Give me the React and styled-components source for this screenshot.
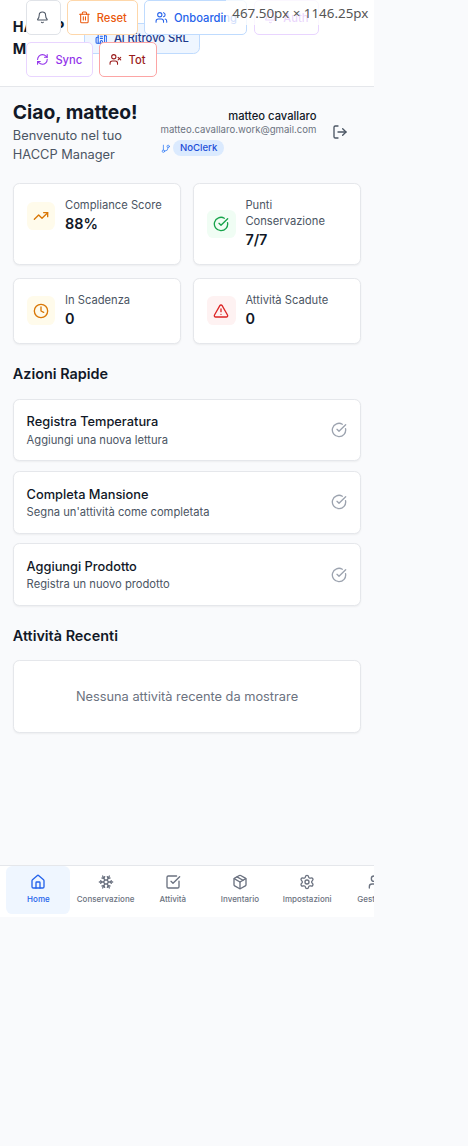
import React from "react";
import styled, { createGlobalStyle, css } from "styled-components";
import {
  Bell, Trash2, Users, RefreshCw, UserX, Building2, GitBranch, LogOut,
  TrendingUp, CircleCheckBig, Clock, TriangleAlert, House, Snowflake,
  SquareCheckBig, Package, Settings, User,
} from "lucide-react";

const Global = createGlobalStyle`
  *, *::before, *::after { box-sizing: border-box; }
  body { margin: 0; background: #f9fafc; color: #111827; font-family: Inter, "Liberation Sans", sans-serif; }
  h1, h2, h3, p { margin: 0; }
  button { font: inherit; color: inherit; margin: 0; }
  svg { flex-shrink: 0; display: block; }
`;

const Phone = styled.div`
  position: relative;
  width: 374.4px;
  height: 917px;
  overflow: hidden;
  display: flex;
  flex-direction: column;
`;

const Header = styled.header`
  height: 87px;
  flex: none;
  display: flex;
  align-items: flex-start;
  gap: 20px;
  padding: 16px 12.8px 0;
  background: #fff;
  border-bottom: 1px solid #e5e7eb;
`;

const Brand = styled.h1`
  width: 51px;
  font-size: 14.4px;
  line-height: 22.4px;
  font-weight: 700;
`;

const Company = styled.div`
  display: flex;
  align-items: center;
  gap: 6.4px;
  height: 31px;
  margin-top: 7px;
  padding: 0 9.9px 1px;
  border: 1px solid #bfdbfe;
  border-radius: 6.4px;
  background: #eff6ff;
  color: #1e3a8a;
  font-size: 11.2px;
  font-weight: 500;
  white-space: nowrap;
  svg { color: #2563eb; }
`;

const DevTools = styled.div`
  position: absolute;
  z-index: 2;
  top: 0;
  left: 25.8px;
  width: 310px;
  display: flex;
  flex-wrap: wrap;
  gap: 7px 6.4px;
`;

const DevButton = styled.button`
  display: flex;
  align-items: center;
  gap: 6.4px;
  width: ${(p) => p.$w}px;
  height: 35px;
  padding: 0 0 0 9.4px;
  border: 1px solid ${(p) => p.$border};
  border-radius: 5px;
  background: #fff;
  color: ${(p) => p.$color};
  font-size: 11.2px;
  font-weight: 500;
`;

const SizeLabel = styled.div`
  position: absolute;
  z-index: 3;
  top: 0;
  right: 0;
  width: 148px;
  height: 25px;
  padding: 4px 6px 0 0;
  text-align: right;
  background: rgba(255, 255, 255, 0.8);
  color: #555;
  font: 13.4px/19px "Noto Sans", sans-serif;
  white-space: nowrap;
`;

const Main = styled.main`
  flex: 1;
  padding: 12.6px 13.2px 0 12.8px;
`;

const Greeting = styled.section`
  display: flex;
  justify-content: space-between;
  align-items: center;
  height: 64.4px;
  margin-bottom: 19px;
`;

const Welcome = styled.div`
  width: 130px;
  white-space: nowrap;
  h2 { font-size: 19.3px; line-height: 25px; padding-bottom: 1px; font-weight: 700; }
  p { width: 120px; white-space: normal; font-size: 12.8px; line-height: 19.2px; color: #4b5563; }
`;

const Account = styled.div`
  display: flex;
  align-items: center;
  gap: 15.4px;
  padding-right: 13.4px;
  color: #4b5563;
`;

const Profile = styled.div`
  padding-top: 2px;
  text-align: right;
  font-size: 9.6px;
  line-height: 12.8px;
  color: #6b7280;
  strong { display: block; font-size: 11.2px; line-height: 15px; font-weight: 500; color: #111827; }
`;

const RoleLine = styled.div`
  display: flex;
  align-items: center;
  gap: 3px;
  margin-top: 3.4px;
  svg { color: #3b82f6; }
`;

const Badge = styled.span`
  padding: 1.6px 6.8px;
  border-radius: 99px;
  background: #dbeafe;
  color: #1d4ed8;
  font-weight: 500;
`;

const surface = css`
  background: #fff;
  border: 1px solid #e5e7eb;
  border-radius: 6.4px;
  box-shadow: 0 1px 2px rgba(0, 0, 0, 0.05);
`;

const StatGrid = styled.section`
  display: grid;
  grid-template-columns: 1fr 1fr;
  gap: 12.8px 12.4px;
`;

const StatCard = styled.article`
  ${surface}
  padding: 12.8px;
`;

const StatRow = styled.div`
  display: flex;
  align-items: center;
  gap: 9.6px;
`;

const tones = {
  amber: ["#fffbeb", "#d97706"],
  green: ["#f0fdf4", "#16a34a"],
  red: ["#fef2f2", "#dc2626"],
};

const IconTile = styled.div`
  display: grid;
  place-items: center;
  flex: none;
  width: 28.8px;
  height: 28.8px;
  border-radius: 6.4px;
  background: ${(p) => tones[p.$tone][0]};
  color: ${(p) => tones[p.$tone][1]};
`;

const StatText = styled.div`
  font-size: 11.2px;
  line-height: 16px;
  color: #4b5563;
  strong { display: block; font-size: 14.4px; line-height: 22.4px; font-weight: 600; color: #111827; }
`;

const SectionTitle = styled.h3`
  margin: ${(p) => p.$top || 19.2}px 0 13.2px;
  font-size: 14.4px;
  line-height: 22.4px;
  font-weight: 600;
`;

const Actions = styled.div`
  display: flex;
  flex-direction: column;
  gap: 9.6px;
`;

const ActionCard = styled.button`
  ${surface}
  display: flex;
  align-items: center;
  justify-content: space-between;
  height: 62.8px;
  padding: 0 13px 0 12.8px;
  text-align: left;
  > svg { color: #9ca3af; }
`;

const ActionText = styled.span`
  display: block;
  font-size: 11.2px;
  line-height: 16px;
  color: #4b5563;
  b { display: block; font-size: 12.8px; line-height: 19.2px; font-weight: 500; color: #111827; }
`;

const EmptyCard = styled.div`
  ${surface}
  height: 73px;
  padding-bottom: 0.6px;
  display: grid;
  place-items: center;
  font-size: 12.8px;
  color: #6b7280;
`;

const Nav = styled.nav`
  flex: none;
  display: flex;
  gap: 3.2px;
  height: 52px;
  padding: 0 6.4px;
  border-top: 1px solid #e5e7eb;
  background: #fff;
`;

const NavItem = styled.a`
  flex: 0 0 64px;
  height: 48px;
  display: flex;
  flex-direction: column;
  align-items: center;
  gap: 3.2px;
  padding-top: 8px;
  border-radius: 6.4px;
  background: ${(p) => (p.$active ? "#eff6ff" : "transparent")};
  color: ${(p) => (p.$active ? "#2563eb" : "#6b7280")};
  font-size: 8px;
  line-height: 12px;
  font-weight: 500;
  white-space: nowrap;
`;

const tools = [
  { icon: Bell, w: 35, border: "#e0e3e8", color: "#4b5563" },
  { icon: Trash2, label: "Reset", w: 70.8, border: "#fed7aa", color: "#ea580c" },
  { icon: Users, label: "Onboarding", w: 103, border: "#bfdbfe", color: "#2563eb" },
  { icon: Bell, label: "Auth", w: 65, border: "#e9d5ff", color: "#9333ea" },
  { icon: RefreshCw, label: "Sync", w: 66.8, border: "#e9d5ff", color: "#9333ea" },
  { icon: UserX, label: "Tot", w: 58, border: "#fca5a5", color: "#991b1b" },
];

const stats = [
  { icon: TrendingUp, tone: "amber", label: "Compliance Score", value: "88%" },
  { icon: CircleCheckBig, tone: "green", label: "Punti Conservazione", value: "7/7" },
  { icon: Clock, tone: "amber", label: "In Scadenza", value: "0" },
  { icon: TriangleAlert, tone: "red", label: "Attività Scadute", value: "0" },
];

const actions = [
  ["Registra Temperatura", "Aggiungi una nuova lettura"],
  ["Completa Mansione", "Segna un'attività come completata"],
  ["Aggiungi Prodotto", "Registra un nuovo prodotto"],
];

const tabs = [
  [House, "Home"],
  [Snowflake, "Conservazione"],
  [SquareCheckBig, "Attività"],
  [Package, "Inventario"],
  [Settings, "Impostazioni"],
  [User, "Gestione"],
];

export default function App() {
  return (
    <>
      <Global />
      <Phone>
        <Header>
          <Brand>HACCP Manager</Brand>
          <Company><Building2 size={12.8} />Al Ritrovo SRL</Company>
        </Header>
        <DevTools>
          {tools.map(({ icon: Icon, label, w, border, color }, i) => (
            <DevButton key={i} $w={w} $border={border} $color={color}>
              <Icon size={12.8} />{label}
            </DevButton>
          ))}
        </DevTools>
        <SizeLabel>467.50px × 1146.25px</SizeLabel>
        <Main>
          <Greeting>
            <Welcome>
              <h2>Ciao, matteo!</h2>
              <p>Benvenuto nel tuo HACCP Manager</p>
            </Welcome>
            <Account>
              <Profile>
                <strong>matteo cavallaro</strong>
                matteo.cavallaro.work@gmail.com
                <RoleLine><GitBranch size={9.6} /><Badge>NoClerk</Badge></RoleLine>
              </Profile>
              <LogOut size={16} />
            </Account>
          </Greeting>
          <StatGrid>
            {stats.map(({ icon: Icon, tone, label, value }) => (
              <StatCard key={label}>
                <StatRow>
                  <IconTile $tone={tone}><Icon size={16} /></IconTile>
                  <StatText>{label}<strong>{value}</strong></StatText>
                </StatRow>
              </StatCard>
            ))}
          </StatGrid>
          <SectionTitle>Azioni Rapide</SectionTitle>
          <Actions>
            {actions.map(([title, text]) => (
              <ActionCard key={title}>
                <ActionText><b>{title}</b>{text}</ActionText>
                <CircleCheckBig size={16} />
              </ActionCard>
            ))}
          </Actions>
          <SectionTitle $top={18.6}>Attività Recenti</SectionTitle>
          <EmptyCard>Nessuna attività recente da mostrare</EmptyCard>
        </Main>
        <Nav>
          {tabs.map(([Icon, label], i) => (
            <NavItem key={label} $active={i === 0}><Icon size={16} />{label}</NavItem>
          ))}
        </Nav>
      </Phone>
    </>
  );
}
